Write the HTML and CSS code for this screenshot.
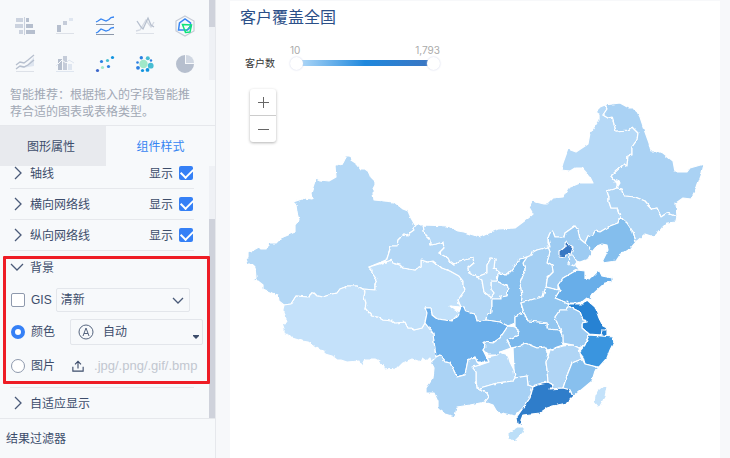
FILE: index.html
```html
<!DOCTYPE html>
<html lang="zh-CN">
  <head>
    <meta charset="UTF-8" />
    <meta name="viewport" content="width=device-width, initial-scale=1.0" />
    <title>客户覆盖全国</title>
    <link rel="stylesheet" href="styles.css">
  </head>
  <body>
    <div class="app">
      <aside class="sidebar">
        <div class="scroll-area">
          <div class="chart-types">
            <button type="button" aria-label="对比柱状图">
              <svg viewBox="0 0 24 24"><path fill="#ccd3df" d="M3 4h7v4H3zM2 10h8v4H2zM6 16h4v4H6z"/><path fill="#b6bfce" d="M13 4h3v4h-3zM13 10h7v4h-7zM13 16h9v4h-9z"/><path stroke="#ccd3df" d="M11.500 3v18"/></svg>
            </button>
            <button type="button" aria-label="瀑布图">
              <svg viewBox="0 0 24 24"><path fill="#b6bfce" d="M4 11h4v7H4z"/><path fill="#c5ccd9" d="M10 7h4v4h-4z"/><path fill="#dfe6f0" d="M16 4h4v3h-4z"/><path stroke="#dde1e8" d="M3 19.500h18"/></svg>
            </button>
            <button type="button" aria-label="分区折线图">
              <svg viewBox="0 0 24 24" fill="none"><path stroke="#8b97aa" d="M3 10.500h18M3 20.500h18"/><path stroke="#3685f2" stroke-width="1.300" d="M3 8l2-1 3-2 5 2 3-1.500 2-2 3-.5M3 19l2-1 3-3 5 2 3-1 2-2 3-.5"/></svg>
            </button>
            <button type="button" aria-label="多系列折线图">
              <svg viewBox="0 0 24 24" fill="none"><path stroke="#d5dae3" stroke-width="1.300" d="M3 17l4-1 3-5 3-5 2 3 3 4 3-5"/><path stroke="#b6bfce" stroke-width="1.300" d="M4 7l4 6 2 2 5-11 3 7 3 2"/><path stroke="#dde1e8" d="M3 19.500h18"/></svg>
            </button>
            <button type="button" aria-label="雷达图">
              <svg viewBox="0 0 24 24" fill="none"><path stroke="#c5cbd6" stroke-width="1.200" d="M12 2l9 5v10l-9 5-9-5V7z"/><path stroke="#3685f2" stroke-width="1.500" d="M5.500 16l1-7L12 5l5.500 4v4l-3 3z"/><path stroke="#10e47a" stroke-width="1.500" d="M9.500 10.500l9 .5-1.500 7-4.500.5z"/><path stroke="#10e47a" d="M12 18l5-6"/></svg>
            </button>
            <button type="button" aria-label="面积图">
              <svg viewBox="0 0 24 24" fill="none"><path fill="#dfe6f0" d="M3 16l3-2 4 1 5-3 6-7v9l-6 1-5 1-4-1z"/><path stroke="#b6bfce" stroke-width="1.300" d="M3 13l4-3 4 1 4-3 6-5M3 17l4-3 4 1 4-2 6-5"/><path stroke="#dde1e8" d="M3 19.500h18"/></svg>
            </button>
            <button type="button" aria-label="组合图">
              <svg viewBox="0 0 24 24" fill="none"><path fill="#b6bfce" d="M5 7h4v11H5z"/><path fill="#c5ccd9" d="M10 4h4v14h-4z"/><path fill="#dfe6f0" d="M15 12h4v6h-4z"/><path stroke="#f7f9fb" d="M5 12l4-4 4 3 1-1"/><path stroke="#dfe6f0" d="M3 14l2-2M14 10l2-2 5 3M3 19.500h18"/></svg>
            </button>
            <button type="button" aria-label="散点图">
              <svg viewBox="0 0 24 24"><circle cx="4.500" cy="18.500" r="1.600" fill="#3d66ca"/><circle cx="8.500" cy="9.500" r="1.600" fill="#2b80e2"/><circle cx="14.500" cy="8.500" r="1.600" fill="#47bdd2"/><circle cx="19.500" cy="5.500" r="1.600" fill="#1194df"/><circle cx="9.500" cy="15.500" r="1.600" fill="#a0e8c8"/><circle cx="15.500" cy="14.500" r="1.600" fill="#2b80e2"/></svg>
            </button>
            <button type="button" aria-label="聚合气泡图">
              <svg viewBox="0 0 24 24"><circle cx="10.500" cy="12" r="4.200" fill="#a0e8c8"/><g fill="#47bdd2"><circle cx="17.700" cy="13.700" r="2.900"/><circle cx="14.800" cy="6.300" r="2"/></g><g fill="#2b80e2"><circle cx="8.300" cy="5.800" r="1.700"/><circle cx="4.500" cy="10.500" r="1.300"/><circle cx="5" cy="15.800" r="1.900"/><circle cx="18" cy="8.500" r="1.200"/></g><g fill="#1194df"><circle cx="9.500" cy="18.500" r="1.600"/><circle cx="14.500" cy="17.900" r="1.900"/></g></svg>
            </button>
            <button type="button" aria-label="饼图">
              <svg viewBox="0 0 24 24"><path fill="#b6bfce" d="M12 3a9 9 0 1 0 9 9h-9z"/><path fill="#d0d7e2" d="M13 3a8 8 0 0 1 8 8h-8z"/></svg>
            </button>
          </div>
          <div class="scrollbar"><div class="thumb thumb-top"></div></div>
        </div>
        <p class="hint">智能推荐：根据拖入的字段智能推荐合适的图表或表格类型。</p>

        <div class="tabs">
          <button type="button" class="tab">图形属性</button>
          <button type="button" class="tab active">组件样式</button>
        </div>

        <div class="scroll-area settings">
          <div class="rows">
            <div class="row">
              <svg class="arrow" viewBox="0 0 14 14"><path d="M5 1l6 6-6 6"/></svg>
              <span class="name">轴线</span>
              <label for="axis">显示</label>
              <input type="checkbox" id="axis" checked />
            </div>
            <div class="row">
              <svg class="arrow" viewBox="0 0 14 14"><path d="M5 1l6 6-6 6"/></svg>
              <span class="name">横向网络线</span>
              <label for="gridH">显示</label>
              <input type="checkbox" id="gridH" checked />
            </div>
            <div class="row">
              <svg class="arrow" viewBox="0 0 14 14"><path d="M5 1l6 6-6 6"/></svg>
              <span class="name">纵向网络线</span>
              <label for="gridV">显示</label>
              <input type="checkbox" id="gridV" checked />
            </div>
            <div class="background">
              <div class="row open">
                <svg class="arrow" viewBox="0 0 14 14"><path d="M1 4l6 6 6-6"/></svg>
                <span class="name">背景</span>
              </div>
              <div class="field">
                <input type="checkbox" id="gis" />
                <label for="gis">GIS</label>
                <div class="select gis-select">
                  <select aria-label="GIS 主题"><option>清新</option></select>
                  <svg class="down" viewBox="0 0 14 14"><path d="M2 4l5 5 5-5"/></svg>
                </div>
              </div>
              <div class="field">
                <input type="radio" id="bgColor" name="bg" checked />
                <label for="bgColor">颜色</label>
                <div class="select color-select">
                  <svg class="auto" viewBox="0 0 16 16"><circle cx="8" cy="8" r="7"/><path d="M5 12l3-8 3 8M6 9.500h4"/></svg>
                  <select aria-label="背景颜色"><option>自动</option></select>
                  <svg class="caret" viewBox="0 0 6 4"><path d="M0 0h6v1L3 4 0 1z"/></svg>
                </div>
              </div>
              <div class="field image-field">
                <input type="radio" id="bgImage" name="bg" />
                <label for="bgImage">图片</label>
                <button type="button" class="upload" aria-label="上传图片">
                  <svg viewBox="0 0 14 14"><path d="M1 8v5h12V8M7 10V2M3.500 5L7 1.500 10.500 5"/></svg>
                </button>
                <span class="formats">.jpg/.png/.gif/.bmp</span>
              </div>
              <div class="highlight"></div>
            </div>
            <div class="row last">
              <svg class="arrow" viewBox="0 0 14 14"><path d="M5 1l6 6-6 6"/></svg>
              <span class="name">自适应显示</span>
            </div>
          </div>
          <div class="scrollbar"><div class="thumb thumb-bottom"></div></div>
        </div>
        <div class="filter">结果过滤器</div>
      </aside>

      <main class="chart">
        <h1>客户覆盖全国</h1>
        <div class="legend">
          <span class="legend-name">客户数</span>
          <div class="range">
            <div class="range-values"><span>10</span><span>1,793</span></div>
            <div class="range-bar">
              <input type="range" min="10" max="1793" value="10" aria-label="最小值" />
              <input type="range" min="10" max="1793" value="1793" aria-label="最大值" />
            </div>
          </div>
        </div>
        <div class="map">
          <svg class="china" viewBox="230 78 490 380" role="img" aria-label="中国地图">
            <!-- roughens the borders and the coast a little -->
            <filter id="rough" x="0" y="0" width="100%" height="100%" color-interpolation-filters="sRGB">
              <feTurbulence type="fractalNoise" baseFrequency="0.18" numOctaves="2" seed="4"/>
              <feDisplacementMap in="SourceGraphic" scale="3" xChannelSelector="R" yChannelSelector="G"/>
            </filter>
            <g filter="url(#rough)">
            <!-- 新疆 -->
            <path fill="#b4d8f6" d="M345 156L350 156 351 160 357 164 361 169 365 169 369 172 371 177 375 181 375 185 373 189 375 191 373 193 374 200 384 201 394 202 403 209 408 211 411 218 415 225 413 228 414 230 407 235 404 234 398 240 397 246 391 246 386 260 369 267 372 270 372 273 377 280 375 284 375 290 363 289 357 286 348 286 340 289 337 293 332 294 323 297 317 296 314 293 312 293 308 297 296 296 291 304 284 305 279 301 278 295 272 293 263 289 263 285 258 281 253 280 256 278 255 267 253 265 247 265 245 259 248 257 248 253 259 247 261 249 266 249 269 243 276 243 281 238 295 232 295 225 299 220 297 213 296 205 293 202 305 198 312 199 311 193 316 178 320 180 329 181 336 177 335 166 339 164 343 163 345 159z"/>
            <!-- 西藏 -->
            <path fill="#c4e1fa" d="M284 305L291 304 296 296 308 297 312 293 314 293 317 296 323 297 332 294 337 293 340 289 348 286 357 286 363 289 365 292 364 297 366 303 365 308 372 316 378 317 383 320 392 321 395 323 405 322 408 328 412 328 414 330 422 328 425 323 433 333 436 357 434 360 431 362 430 358 427 361 423 358 421 362 412 359 403 363 397 369 384 370 384 365 380 364 379 361 375 359 365 359 361 367 359 361 347 362 341 360 337 360 332 356 325 354 325 351 320 350 308 342 302 341 292 338 289 335 284 333 284 329 282 323 285 324 287 321 283 313 283 309z"/>
            <!-- 青海 -->
            <path fill="#c1e0fa" d="M386 262L391 260 393 263 400 265 403 268 415 270 421 267 421 260 428 262 433 261 442 268 450 271 459 276 463 281 463 286 465 289 463 293 458 300 461 307 450 306 455 310 459 312 457 316 452 321 437 319 432 315 431 308 425 308 427 313 425 323 422 328 414 330 412 328 408 328 405 322 395 323 392 321 383 320 378 317 372 316 365 308 366 303 364 297 365 292 363 289 375 290 375 284 377 280 372 273 372 270 369 267z"/>
            <!-- 甘肃 -->
            <path fill="#b3d7f6" d="M415 225L423 225 425 235 431 241 431 245 436 244 443 242 444 248 439 253 448 258 450 262 454 265 459 261 473 258 474 263 468 268 469 273 477 277 482 280 484 292 491 297 494 293 491 289 491 281 497 281 508 287 507 296 501 297 501 299 492 299 492 312 487 314 486 320 477 321 475 314 466 312 464 307 461 307 458 300 463 293 465 289 463 286 463 281 459 276 450 271 442 268 433 261 428 262 421 260 421 267 415 270 403 268 400 265 393 263 391 260 386 262 391 246 397 246 398 240 404 234 407 235 414 230 413 228z"/>
            <!-- 内蒙古 -->
            <path fill="#b6d9f7" d="M423 225L448 226 458 231 464 232 470 234 480 237 498 229 515 228 527 219 533 214 529 207 532 201 544 204 547 204 553 198 563 197 568 188 580 183 593 183 590 177 582 168 575 168 570 171 561 170 563 163 568 149 576 152 588 144 590 133 599 120 599 115 594 113 600 107 605 105 607 109 603 115 608 118 612 117 616 131 628 130 632 127 638 133 637 140 632 147 632 155 628 156 627 166 624 164 611 176 617 183 617 188 607 191 609 197 609 202 611 208 617 208 620 217 618 223 610 226 600 232 595 231 593 235 588 236 585 243 580 239 578 230 575 226 565 233 564 237 555 237 553 232 550 233 548 238 548 243 550 247 537 250 533 252 532 255 527 257 520 259 512 270 508 274 500 273 494 268 495 259 491 258 487 265 487 273 477 277 469 273 468 268 474 263 473 258 459 261 454 265 450 262 448 258 439 253 444 248 443 242 436 244 431 245 431 241 425 235z"/>
            <!-- 黑龙江 -->
            <path fill="#aad2f4" d="M605 105L620 103 629 108 635 108 640 117 645 132 649 143 651 151 658 151 663 153 673 161 675 172 687 172 690 168 704 164 702 173 697 187 691 199 683 198 676 203 677 217 667 213 661 217 657 208 652 209 645 201 635 197 625 196 622 189 617 188 620 183 617 180 617 183 611 176 624 164 627 166 628 156 632 155 632 147 637 140 638 133 632 127 628 130 616 131 612 117 608 118 603 115 607 109z"/>
            <!-- 吉林 -->
            <path fill="#afd5f5" d="M617 188L622 189 625 196 635 197 645 201 652 209 657 208 661 217 667 213 677 217 676 222 667 223 662 228 658 233 654 237 645 234 636 242 633 232 627 223 620 217 617 208 611 208 609 202 609 197 607 191z"/>
            <!-- 辽宁 -->
            <path fill="#84beed" d="M620 217L627 223 633 232 636 242 630 249 620 255 616 261 602 263 603 260 608 250 607 245 602 244 597 246 592 252 589 248 585 243 588 236 593 235 595 231 600 232 610 226 618 223z"/>
            <!-- 河北 -->
            <path fill="#9dcbf2" d="M548 238L550 233 553 232 555 237 564 237 565 233 575 226 578 230 580 239 585 243 589 248 592 252 588 259 580 262 576 261 576 266 580 270 577 270 563 278 558 285 558 290 546 287 547 278 553 272 552 265 547 262 550 252 548 247 550 247z"/>
            <!-- 北京 天津 -->
            <path fill="#3978c3" d="M559 252L565 247 565 243 567 241 569 245 573 248 571 254 566 255 565 257 559 256z"/>
            <path fill="#a6d0f4" d="M570 255L573 255 577 262 574 266 569 264z"/>
            <!-- 山东 -->
            <path fill="#68aee9" d="M577 270L585 271 585 278 590 279 599 270 602 276 612 278 612 282 605 283 592 295 591 300 587 298 582 302 576 303 567 303 555 298 560 290 558 285 563 278z"/>
            <!-- 山西 -->
            <path fill="#a4cff3" d="M527 257L532 255 533 252 537 250 548 247 550 252 547 262 552 265 553 272 547 278 546 287 543 297 534 299 521 303 522 297 520 283 525 270 523 263z"/>
            <!-- 陕西 -->
            <path fill="#86bfee" d="M520 259L527 257 523 263 525 270 520 283 522 297 521 303 524 313 515 317 515 323 508 326 500 322 486 320 487 314 492 312 492 299 501 299 501 297 507 296 508 287 497 281 498 274 508 274 512 270z"/>
            <!-- 宁夏 -->
            <path fill="#bbdcf8" d="M477 277L487 273 487 265 491 258 495 259 494 268 500 273 498 274 497 281 491 281 491 289 494 293 491 297 484 292 482 280z"/>
            <!-- 河南 -->
            <path fill="#92c6f0" d="M521 303L534 299 543 297 546 287 558 290 560 290 555 298 567 303 570 307 567 310 560 310 555 317 558 325 562 330 547 329 547 323 528 321 524 313z"/>
            <!-- 江苏 上海 -->
            <path fill="#2782d3" d="M567 301L570 304 583 304 587 300 595 307 599 318 603 326 607 328 602 335 589 334 582 328 582 323 587 322 586 320 583 320 580 312 570 307z"/>
            <path fill="#2782d3" d="M602 330L607 330 607 337 601 336z"/>
            <!-- 安徽 -->
            <path fill="#9dcbf2" d="M570 307L580 312 583 320 587 321 582 323 582 328 589 334 585 345 579 348 573 345 563 343 562 332 558 325 555 317 560 310 567 310z"/>
            <!-- 浙江 -->
            <path fill="#3a95df" d="M589 335L601 336 613 337 614 342 610 350 607 358 599 367 593 366 585 364 583 357 579 352 585 345z"/>
            <!-- 湖北 -->
            <path fill="#79b7eb" d="M515 317L524 313 528 321 547 323 547 329 558 330 563 335 563 345 548 350 546 347 537 348 525 343 520 346 511 348 507 340 518 335 519 330 515 327z"/>
            <!-- 湖南 -->
            <path fill="#9bcaf1" d="M513 348L520 346 525 343 537 348 546 347 548 352 546 363 547 370 548 382 542 383 533 387 528 385 527 376 515 378 514 370z"/>
            <!-- 江西 -->
            <path fill="#b0d5f5" d="M563 346L573 345 579 348 580 353 582 359 572 363 568 373 563 388 550 389 553 385 548 382 547 370 546 362 550 350z"/>
            <!-- 福建 -->
            <path fill="#88c0ee" d="M582 359L585 364 593 366 599 368 595 371 592 381 580 391 573 397 570 390 563 388 568 373 572 363z"/>
            <!-- 四川 -->
            <path fill="#6aaeea" d="M425 308L431 308 432 315 437 319 452 321 457 316 459 312 461 307 464 307 466 312 475 314 477 321 486 320 500 322 508 326 500 338 493 343 483 342 486 346 483 350 489 362 477 362 475 357 468 360 465 375 457 377 450 363 445 362 440 355 436 357 433 333 425 323 427 313z"/>
            <!-- 重庆 -->
            <path fill="#a3cff4" d="M508 326L515 327 519 330 518 335 507 340 511 348 500 352 497 355 488 355 483 350 486 346 483 342 493 343 500 338z"/>
            <!-- 贵州 -->
            <path fill="#b9dbf8" d="M472 367L480 365 489 362 487 357 497 355 500 352 508 355 510 362 514 370 515 378 513 381 497 383 480 388 477 388 476 380 476 372z"/>
            <!-- 云南 -->
            <path fill="#abd3f5" d="M436 357L440 355 445 362 450 363 457 377 465 375 468 360 475 357 477 362 480 365 472 367 476 372 476 380 477 388 487 393 489 397 485 402 470 405 457 407 455 417 445 414 438 409 438 402 434 393 426 393 426 388 433 378 434 368 431 362z"/>
            <!-- 广西 -->
            <path fill="#a6d0f4" d="M477 388L480 388 497 383 513 381 515 378 527 376 528 385 533 387 530 398 523 408 515 416 497 412 493 405 485 402 489 397 487 393z"/>
            <!-- 广东 -->
            <path fill="#2f7dca" d="M533 387L535 385 542 383 548 382 553 385 550 389 563 388 570 390 573 397 567 403 553 406 547 408 540 413 523 415 521 420 521 425 517 424 516 418 523 408 530 398z"/>
            <!-- 海南 台湾 -->
            <path fill="#bcdff8" d="M508 433L517 427 525 427 523 433 515 441 508 439z"/>
            <path fill="#c4e2fa" d="M604 385L607 387 605 397 599 408 594 402 595 396 598 390z"/>
            </g>
          </svg>
          <div class="zoom">
            <button type="button" aria-label="放大"><svg viewBox="0 0 11 11"><path d="M0 5.500h11M5.500 0v11"/></svg></button>
            <button type="button" aria-label="缩小"><svg viewBox="0 0 11 11"><path d="M0 5.500h11"/></svg></button>
          </div>
        </div>
      </main>
    </div>
  </body>
</html>
```

FILE: styles.css
```css
* {
  box-sizing: border-box;
}
body {
  margin: 0;
  font-family: "Liberation Sans", "Noto Sans CJK SC", sans-serif;
  font-size: 12px;
  line-height: 18px;
  color: #3d4d6b;
  background-color: #f7f8fa;
}
button,
select,
input {
  margin: 0;
  padding: 0;
  font: inherit;
  color: inherit;
}
button {
  border: none;
  background: none;
  cursor: pointer;
}
svg {
  display: block;
}
.app {
  display: flex;
  min-height: 100vh;
}

/* sidebar */
.sidebar {
  flex: none;
  width: 216px;
  background-color: #f7f9fb;
  border-right: 1px solid #e6e8ec;
}
.scroll-area {
  display: flex;
  overflow: hidden;
}
.scrollbar {
  width: 6px;
  background-color: #eff1f5;
}
.thumb {
  background-color: #cfd2db;
}
.thumb-top {
  height: 27px;
}
.thumb-bottom {
  height: 100%;
  margin-top: 53px;
}
.chart-types {
  flex: 1;
  display: grid;
  grid-template-columns: repeat(5, 40px);
  grid-auto-rows: 38px;
  padding: 7px 0 0 5px;
  height: 80px;
}
.chart-types button {
  display: flex;
  align-items: center;
  justify-content: center;
}
.chart-types svg {
  width: 24px;
  height: 24px;
}
.hint {
  margin: 0;
  padding: 7px 20px 4px 10px;
  line-height: 17px;
  color: #a1a8b5;
}
.tabs {
  display: flex;
  border-top: 1px solid #e6e8ec;
}
.tab {
  width: 106px;
  height: 40px;
  padding: 1px 4px 0 0;
  background-color: #e8eaee;
}
.tab.active {
  flex: 1;
  padding-right: 0;
  color: #3685f2;
  background-color: #f7f9fb;
}

/* settings */
.settings {
  border-bottom: 1px solid #e6e8ec;
}
.rows {
  flex: 1;
  margin-top: -8px;
}
.row {
  display: flex;
  align-items: center;
  height: 31px;
  margin: 0 15px 0 10px;
  padding-right: 1px;
  border-bottom: 1px solid #e6e8ec;
}
.row.open,
.row.last {
  border-bottom: none;
}
.row.last {
  height: 30px;
}
.arrow {
  width: 14px;
  height: 14px;
  margin-right: 6px;
}
.arrow path,
.down path {
  fill: none;
  stroke: #4a5a78;
  stroke-width: 1.3;
}
.name {
  flex: 1;
}
.name,
.row label {
  padding-top: 2px;
}
.row label {
  margin-right: 6px;
}
input[type="checkbox"],
input[type="radio"] {
  appearance: none;
  flex: none;
  width: 14px;
  height: 14px;
  border: 1px solid #8e99ad;
  border-radius: 2px;
  background-color: #fff;
}
input[type="checkbox"]:checked {
  border: none;
  background-color: #3580f6;
}
input[type="checkbox"]:checked::before {
  content: "";
  display: block;
  width: 10px;
  height: 6px;
  margin: 2px;
  border-left: 2px solid #fff;
  border-bottom: 2px solid #fff;
  transform: rotate(-45deg);
}
input[type="radio"] {
  border-radius: 50%;
}
input[type="radio"]:checked {
  border: 4px solid #3580f6;
}
.background {
  position: relative;
}
.background::after {
  content: "";
  display: block;
  margin: 5px 15px 0 10px;
  border-bottom: 1px solid #e6e8ec;
}
.highlight {
  position: absolute;
  top: 5px;
  right: -1px;
  bottom: 4px;
  left: 3px;
  border: 3px solid #ee1c25;
  border-radius: 1px;
  pointer-events: none;
}
.field {
  display: flex;
  align-items: center;
  height: 32px;
  margin-top: 2px;
  padding: 0 6px 0 11px;
}
.field + .field {
  margin-top: 0;
}
.field + .image-field {
  margin-top: 2px;
}
.field label {
  margin-left: 6px;
}
.select {
  position: relative;
}
.select select {
  appearance: none;
  display: block;
  width: 100%;
  height: 24px;
  padding-left: 4px;
  border: 1px solid #e3e6eb;
  border-radius: 2px;
  background-color: #f7f9fb;
}
.gis-select {
  width: 134px;
  margin-left: 4px;
}
.color-select {
  flex: 1;
  margin-left: 15px;
}
.color-select select {
  height: 26px;
  padding-left: 32px;
}
.down {
  position: absolute;
  top: 6px;
  right: 5px;
  width: 14px;
  height: 14px;
  pointer-events: none;
}
.auto {
  position: absolute;
  top: 5px;
  left: 8px;
  width: 16px;
  height: 16px;
  pointer-events: none;
}
.auto circle,
.auto path {
  fill: none;
  stroke: #56657f;
}
.caret {
  position: absolute;
  right: 4px;
  bottom: 6px;
  width: 6px;
  height: 4px;
  fill: #3d4d6b;
  pointer-events: none;
}
.upload {
  margin-left: 17px;
}
.upload svg {
  width: 12px;
  height: 12px;
}
.upload path {
  fill: none;
  stroke: #3d4d6b;
  stroke-width: 1.3;
}
.formats {
  margin-left: 10px;
  font-size: 13px;
  color: #c2c7d0;
}
.filter {
  padding: 11px 6px;
}

/* chart */
.chart {
  flex: 1;
  min-width: 0;
  margin: 1px 10px 0 14px;
  background-color: #fff;
}
h1 {
  margin: 0;
  padding: 5px 10px 3px;
  font-size: 16px;
  font-weight: normal;
  line-height: 24px;
  color: #2b4f88;
}
.legend {
  display: flex;
  align-items: flex-end;
  padding: 11px 15px 0;
  font-size: 10px;
  line-height: 12px;
}
.legend-name {
  width: 45px;
  color: #333;
}
.range {
  width: 150px;
}
.range-values {
  display: flex;
  justify-content: space-between;
  font-family: Inter, sans-serif;
  color: #aaa;
}
.range-bar {
  position: relative;
  height: 14px;
  padding: 4px 12px;
}
.range-bar::before {
  content: "";
  display: block;
  height: 6px;
  background: linear-gradient(to right, #aad5f7, #1f88dd 50%, #3a76c3);
}
.range-bar input {
  appearance: none;
  position: absolute;
  top: 0;
  left: 0;
  width: 100%;
  height: 14px;
  background: none;
  pointer-events: none;
}
.range-bar input::-webkit-slider-thumb {
  appearance: none;
  width: 13px;
  height: 13px;
  border-radius: 50%;
  background-color: #fff;
  box-shadow: 0 0 2px #c9cfe6;
  pointer-events: auto;
}
.map {
  position: relative;
  margin-top: 8px;
}
.china {
  width: 100%;
}
.china path {
  stroke: #fff;
  stroke-width: 1.2;
  stroke-linejoin: round;
}
.zoom {
  position: absolute;
  top: 11px;
  left: 20px;
  width: 26px;
  border-radius: 3px;
  background-color: #fff;
  box-shadow: 0 1px 3px rgba(0, 0, 0, 0.3);
}
.zoom button {
  display: flex;
  align-items: center;
  justify-content: center;
  width: 100%;
  height: 26px;
}
.zoom button + button {
  height: 27px;
  border-top: 1px solid #ccc;
}
.zoom svg {
  width: 11px;
  height: 11px;
  stroke: #666;
}
```
